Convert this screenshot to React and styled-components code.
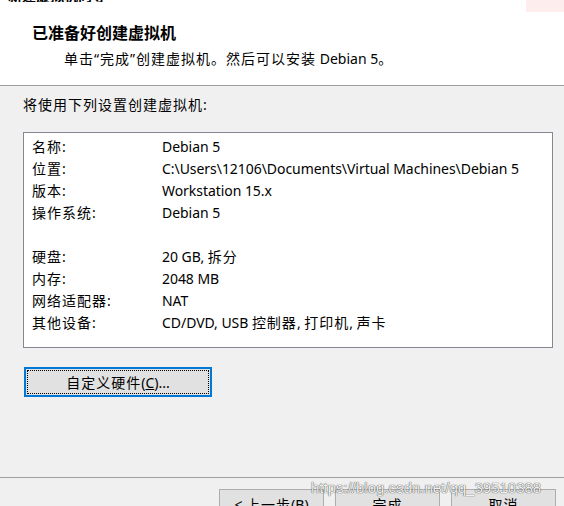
import React from 'react';
import styled, { createGlobalStyle } from 'styled-components';

const GlobalStyle = createGlobalStyle`
  html, body {
    margin: 0;
    padding: 0;
    background: #f0f0f0;
  }
  body {
    font-family: "Noto Sans", "Noto Sans CJK SC", sans-serif;
    color: #000;
  }
`;

const settings = [
  { label: '名称:', value: 'Debian 5' },
  { label: '位置:', value: 'C:\\Users\\12106\\Documents\\Virtual Machines\\Debian 5' },
  { label: '版本:', value: 'Workstation 15.x' },
  { label: '操作系统:', value: 'Debian 5' },
  { label: '', value: '' },
  { label: '硬盘:', value: '20 GB, 拆分' },
  { label: '内存:', value: '2048 MB' },
  { label: '网络适配器:', value: 'NAT' },
  { label: '其他设备:', value: 'CD/DVD, USB 控制器, 打印机, 声卡' },
];

// windows UI font draws han glyphs a bit wider than Noto, so pad them out
const cjk = (text) =>
  text.split(/([\u3000-\u9fff\uff00-\uffef“”]+)/).map((part, i) =>
    /[\u3000-\u9fff\uff00-\uffef“”]/.test(part) ? <Han key={i}>{part}</Han> : part
  );

const App = () => {
  return (
    <Page>
      <GlobalStyle />
      <Header>
        <TopStrip>
          <WindowTitle>
            <span>新建虚拟机向导</span>
          </WindowTitle>
          <CloseHover />
        </TopStrip>
        <Heading>已准备好创建虚拟机</Heading>
        <Subtitle>{cjk('单击“完成”创建虚拟机。然后可以安装 ')}Debian 5{cjk('。')}</Subtitle>
      </Header>

      <Body>
        <Intro>{cjk('将使用下列设置创建虚拟机')}:</Intro>
        <ListBox>
          {settings.map((item, i) => (
            <Row key={i}>
              <Label>{cjk(item.label)}</Label>
              <Value>{cjk(item.value)}</Value>
            </Row>
          ))}
        </ListBox>
        <FocusButton>
          <FocusRing>
            {cjk('自定义硬件')}(<u>C</u>)...
          </FocusRing>
        </FocusButton>
      </Body>

      <Footer>
        <DialogButton>&lt; {cjk('上一步')}(B)</DialogButton>
        <DialogButton>{cjk('完成')}</DialogButton>
        <DialogButton>{cjk('取消')}</DialogButton>
      </Footer>

      <Watermark>https://blog.csdn.net/qq_39510388</Watermark>
    </Page>
  );
};

const Page = styled.div`
  position: relative;
  width: 564px;
  height: 506px;
  overflow: hidden;
  display: flex;
  flex-direction: column;
  background: #f0f0f0;
`;

const Han = styled.span`
  letter-spacing: 1px;
`;

const Header = styled.div`
  height: 86px;
  box-sizing: border-box;
  background: #fff;
  border-bottom: 1px solid #a0a0a0;
  display: flex;
  flex-direction: column;
`;

const TopStrip = styled.div`
  height: 12px;
  display: flex;
  justify-content: space-between;
  align-items: flex-start;
`;

const WindowTitle = styled.div`
  height: 2px;
  overflow: hidden;
  margin-left: 8px;
  display: flex;
  align-items: flex-end;

  span {
    font-size: 14px;
    font-weight: bold;
    line-height: 12px;
    white-space: nowrap;
  }
`;

const CloseHover = styled.div`
  width: 38px;
  height: 12px;
  background: #fdeded;
`;

const Heading = styled.div`
  margin: 11px 0 0 32px;
  font-size: 16px;
  font-weight: bold;
  line-height: 20px;
`;

const Subtitle = styled.div`
  margin: 6px 0 0 64px;
  font-size: 14px;
  line-height: 20px;
  white-space: nowrap;
`;

const Body = styled.div`
  flex: 1;
  padding: 9px 11px 0 23px;
  display: flex;
  flex-direction: column;
  align-items: flex-start;
`;

const Intro = styled.div`
  font-size: 14px;
  line-height: 20px;
`;

const ListBox = styled.div`
  margin-top: 17px;
  align-self: stretch;
  height: 216px;
  box-sizing: border-box;
  background: #fff;
  border: 1px solid #828790;
  padding: 2px 0 0 8px;
`;

const Row = styled.div`
  display: flex;
  height: 22px;
  align-items: center;
  font-size: 14px;
  white-space: nowrap;
`;

const Label = styled.div`
  width: 130px;
  flex-shrink: 0;
`;

const Value = styled.div`
  letter-spacing: -0.05px;
`;

const FocusButton = styled.div`
  margin: 19px 0 0 1px;
  width: 188px;
  height: 30px;
  box-sizing: border-box;
  border: 2px solid #0078d7;
  background: #e1e1e1;
  padding: 1px;
  display: flex;
`;

const FocusRing = styled.div`
  flex: 1;
  border: 1px dotted #000;
  display: flex;
  align-items: center;
  justify-content: center;
  font-size: 14px;
  white-space: pre;
`;

const Footer = styled.div`
  height: 29px;
  box-sizing: border-box;
  border-top: 1px solid #a0a0a0;
  padding: 11px 8px 0 0;
  display: flex;
  justify-content: flex-end;
  gap: 11px;
`;

const DialogButton = styled.div`
  width: 105px;
  height: 30px;
  flex-shrink: 0;
  box-sizing: border-box;
  border: 1px solid #adadad;
  background: #e1e1e1;
  display: flex;
  justify-content: center;
  align-items: center;
  font-size: 14px;
  white-space: pre;
`;

const Watermark = styled.div`
  position: absolute;
  left: 311px;
  top: 479px;
  font-family: "Liberation Sans", Arial, sans-serif;
  font-size: 15px;
  line-height: 18px;
  color: rgba(255, 255, 255, 0.95);
  text-shadow: 0 0 1px rgba(0, 0, 0, 0.7), 0 0 1px rgba(0, 0, 0, 0.5);
  white-space: nowrap;
`;

export default App;
